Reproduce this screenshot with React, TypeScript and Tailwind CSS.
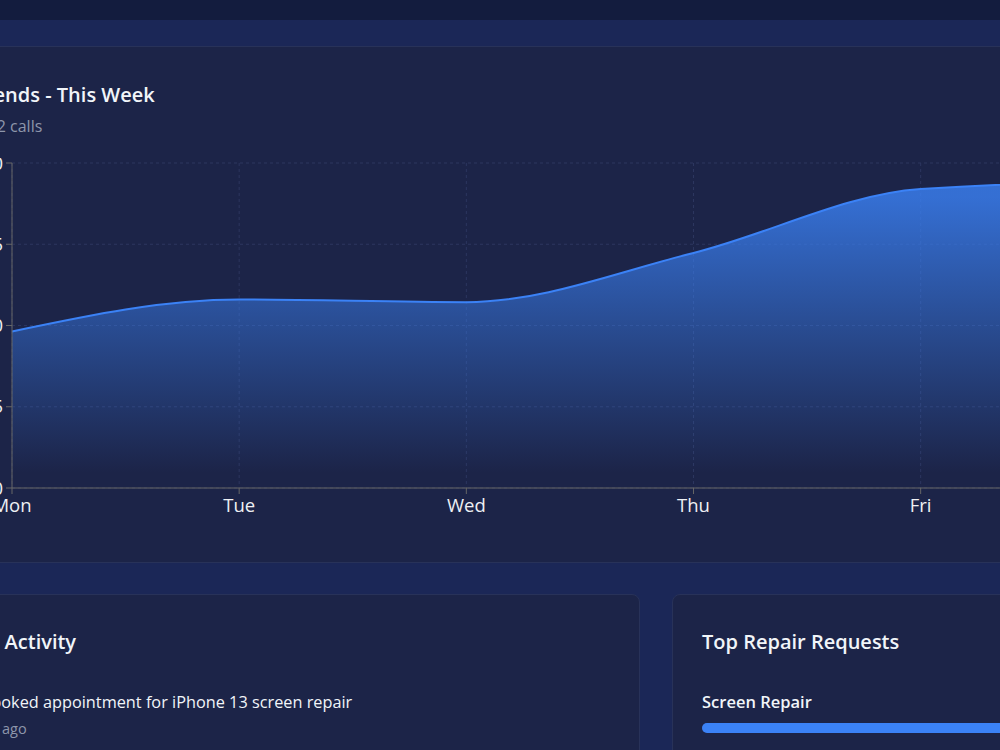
import React from "react";

const days = ["Mon", "Tue", "Wed", "Thu", "Fri", "Sat", "Sun"];
const values = [28.9, 34.8, 34.3, 43.4, 55.2, 56.6, 52];

const PLOT_L = 79;
const PLOT_R = 1442;
const PLOT_T = 5;
const PLOT_B = 330;
const MAX = 60;

function monotonePath(pts: [number, number][]) {
  const n = pts.length;
  const t: number[] = new Array(n).fill(0);
  for (let i = 1; i < n - 1; i++) {
    const h0 = pts[i][0] - pts[i - 1][0];
    const h1 = pts[i + 1][0] - pts[i][0];
    const s0 = (pts[i][1] - pts[i - 1][1]) / h0;
    const s1 = (pts[i + 1][1] - pts[i][1]) / h1;
    const p = (s0 * h1 + s1 * h0) / (h0 + h1);
    t[i] =
      (Math.sign(s0) + Math.sign(s1)) *
        Math.min(Math.abs(s0), Math.abs(s1), 0.5 * Math.abs(p)) || 0;
  }
  const sFirst = (pts[1][1] - pts[0][1]) / (pts[1][0] - pts[0][0]);
  t[0] = (3 * sFirst - t[1]) / 2;
  const sLast = (pts[n - 1][1] - pts[n - 2][1]) / (pts[n - 1][0] - pts[n - 2][0]);
  t[n - 1] = (3 * sLast - t[n - 2]) / 2;
  let d = `M${pts[0][0]},${pts[0][1]}`;
  for (let i = 0; i < n - 1; i++) {
    const [x0, y0] = pts[i];
    const [x1, y1] = pts[i + 1];
    const dx = (x1 - x0) / 3;
    d += `C${x0 + dx},${y0 + dx * t[i]},${x1 - dx},${y1 - dx * t[i + 1]},${x1},${y1}`;
  }
  return d;
}

function Chart() {
  const step = (PLOT_R - PLOT_L) / (days.length - 1);
  const pts: [number, number][] = values.map((v, i) => [
    PLOT_L + i * step,
    PLOT_B - (v / MAX) * (PLOT_B - PLOT_T),
  ]);
  const line = monotonePath(pts);
  const area = `${line}L${PLOT_R},${PLOT_B}L${PLOT_L},${PLOT_B}Z`;
  const yTicks = [0, 15, 30, 45, 60];
  return (
    <svg width={1446} height={372} className="block">
      <defs>
        <linearGradient id="callsFill" x1="0" y1="0" x2="0" y2="1">
          <stop offset="5%" stopColor="#3b82f6" stopOpacity={0.8} />
          <stop offset="95%" stopColor="#3b82f6" stopOpacity={0} />
        </linearGradient>
      </defs>
      {yTicks.map((v) => {
        const y = PLOT_B - (v / MAX) * (PLOT_B - PLOT_T);
        return (
          <line key={v} x1={PLOT_L} x2={PLOT_R} y1={y} y2={y} stroke="#2c365f" strokeDasharray="3 3" />
        );
      })}
      {days.map((d, i) => (
        <line key={d} x1={PLOT_L + i * step} x2={PLOT_L + i * step} y1={PLOT_T} y2={PLOT_B} stroke="#2c365f" strokeDasharray="3 3" />
      ))}
      <path d={area} fill="url(#callsFill)" />
      <path d={line} fill="none" stroke="#3b82f6" strokeWidth={2} />
      <line x1={PLOT_L} x2={PLOT_L} y1={PLOT_T} y2={PLOT_B} stroke="#666" />
      <line x1={PLOT_L} x2={PLOT_R} y1={PLOT_B} y2={PLOT_B} stroke="#666" />
      {yTicks.map((v) => {
        const y = PLOT_B - (v / MAX) * (PLOT_B - PLOT_T);
        return (
          <g key={v}>
            <line x1={PLOT_L - 6} x2={PLOT_L} y1={y} y2={y} stroke="#666" />
            <text x={PLOT_L - 9} y={y} dy="0.355em" textAnchor="end" fill="#eef0f4" fontSize={18.5}>
              {v}
            </text>
          </g>
        );
      })}
      {days.map((d, i) => (
        <g key={d}>
          <line x1={PLOT_L + i * step} x2={PLOT_L + i * step} y1={PLOT_B} y2={PLOT_B + 6} stroke="#666" />
          <text x={PLOT_L + i * step} y={PLOT_B + 17} dy="0.355em" textAnchor="middle" fill="#eef0f4" fontSize={18.5}>
            {d}
          </text>
        </g>
      ))}
    </svg>
  );
}

export default function App() {
  return (
    <div
      className="w-[1000px] h-[750px] overflow-hidden bg-[#1b2757]"
      style={{ fontFamily: '"Open Sans", "Noto Sans", sans-serif' }}
    >
      <div className="h-[20px] bg-[#131c3e]" />
      <div className="ml-[-97px] w-[1506px] pt-[26px]">
        <div className="h-[517px] rounded-lg border border-[#283259] bg-[#1c2448] px-[29px] pt-[34px]">
          <h2 className="text-[20px] leading-[28px] font-semibold text-[#f1f5f9]">Call Trends - This Week</h2>
          <p className="mt-[6px] text-[16px] leading-[22px] text-[#8e96ab]">Total: 242 calls</p>
          <div className="mt-[21px]">
            <Chart />
          </div>
        </div>
        <div className="mt-[31px] grid grid-cols-2 gap-8">
          <div className="h-[300px] rounded-lg border border-[#283259] bg-[#1c2448] px-[29px] pt-[33px]">
            <h3 className="text-[20px] leading-[28px] font-semibold text-[#f1f5f9]">Recent Activity</h3>
            <div className="mt-[35px] flex gap-3">
              <div className="w-9 h-9 rounded-full bg-[#24305c] shrink-0" />
              <div>
                <p className="text-[16.3px] leading-[22px] text-[#f1f5f9]">Booked appointment for iPhone 13 screen repair</p>
                <p className="mt-[6px] text-[14.5px] leading-[20px] text-[#8e96ab]">2h ago</p>
              </div>
            </div>
          </div>
          <div className="h-[300px] rounded-lg border border-[#283259] bg-[#1c2448] px-[29px] pt-[33px]">
            <h3 className="text-[20px] leading-[28px] font-semibold text-[#f1f5f9]">Top Repair Requests</h3>
            <div className="mt-[35px]">
              <div className="flex justify-between text-[16.5px] leading-[22px] font-semibold text-[#f1f5f9]">
                <span>Screen Repair</span>
                <span>45%</span>
              </div>
              <div className="mt-[10px] h-[10px] rounded-full bg-[#2a3560]">
                <div className="h-full w-[85%] rounded-full bg-[#3b82f6]" />
              </div>
            </div>
          </div>
        </div>
      </div>
    </div>
  );
}
